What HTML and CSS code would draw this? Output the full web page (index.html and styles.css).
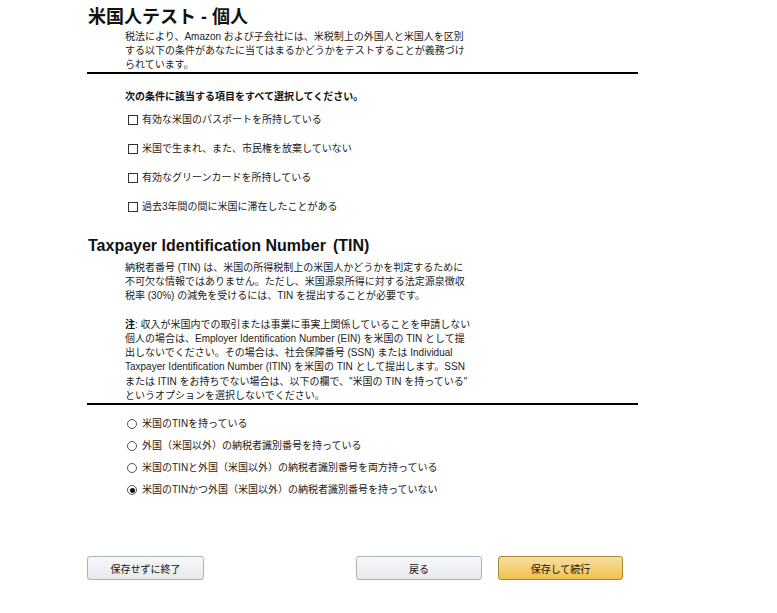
FILE: index.html
```html
<!DOCTYPE html>
<html lang="ja">
<head>
<meta charset="utf-8">
<title>米国人テスト - 個人</title>
<link rel="stylesheet" href="styles.css">
</head>
<body>
<div class="page">
  <h1 class="title">米国人テスト - 個人</h1>
  <p class="para intro">税法により、Amazon および子会社には、米税制上の外国人と米国人を区別<br>する以下の条件があなたに当てはまるかどうかをテストすることが義務づけ<br>られています。</p>
  <div class="rule"></div>

  <p class="label">次の条件に該当する項目をすべて選択してください。</p>
  <ul class="checks">
    <li class="opt"><span class="box"></span>有効な米国のパスポートを所持している</li>
    <li class="opt"><span class="box"></span>米国で生まれ、また、市民権を放棄していない</li>
    <li class="opt"><span class="box"></span>有効なグリーンカードを所持している</li>
    <li class="opt"><span class="box"></span>過去3年間の間に米国に滞在したことがある</li>
  </ul>

  <h2 class="subtitle">Taxpayer Identification Number<span class="tinabbr">(TIN)</span></h2>
  <p class="para tin">納税者番号 (TIN) は、米国の所得税制上の米国人かどうかを判定するために<br>不可欠な情報ではありません。ただし、米国源泉所得に対する法定源泉徴収<br>税率 (30%) の減免を受けるには、TIN を提出することが必要です。<br><br><b>注</b>: 収入が米国内での取引または事業に事実上関係していることを申請しない<br>個人の場合は、Employer Identification Number (EIN) を米国の TIN として提<br>出しないでください。その場合は、社会保障番号 (SSN) または Individual<br>Taxpayer Identification Number (ITIN) を米国の TIN として提出します。SSN<br>または ITIN をお持ちでない場合は、以下の欄で、"米国の TIN を持っている"<br>というオプションを選択しないでください。</p>
  <div class="rule"></div>

  <ul class="radios">
    <li class="opt"><span class="radio"></span>米国のTINを持っている</li>
    <li class="opt"><span class="radio"></span>外国（米国以外）の納税者識別番号を持っている</li>
    <li class="opt"><span class="radio"></span>米国のTINと外国（米国以外）の納税者識別番号を両方持っている</li>
    <li class="opt"><span class="radio checked"></span>米国のTINかつ外国（米国以外）の納税者識別番号を持っていない</li>
  </ul>

  <div class="actions">
    <button class="btn exit">保存せずに終了</button>
    <div class="right">
      <button class="btn back">戻る</button>
      <button class="btn primary">保存して続行</button>
    </div>
  </div>
</div>
</body>
</html>
```

FILE: styles.css
```css
* { box-sizing: border-box; }
html, body { margin: 0; padding: 0; background: #fff; }
body {
  font-family: "Liberation Sans", "Noto Sans CJK JP", sans-serif;
  color: #222;
}
.page {
  width: 638px;
  padding-left: 87px;
  padding-top: 6px;
}
.title {
  margin: 0;
  font-size: 18px;
  line-height: 22px;
  font-weight: bold;
  color: #111;
  padding-left: 1px;
}
.para {
  margin: 0 0 0 38px;
  font-size: 10px;
  white-space: nowrap;
  color: #222;
}
.intro {
  margin-top: 2px;
  line-height: 14px;
}
.rule {
  height: 2px;
  background: #000;
  width: 551px;
}
.label {
  margin: 16px 0 0 38px;
  font-size: 10px;
  line-height: 14px;
  font-weight: bold;
  color: #111;
}
ul { list-style: none; margin: 0; padding: 0; }
.checks {
  margin: 9px 0 0 41px;
  display: flex;
  flex-direction: column;
  gap: 15px;
}
.opt {
  display: flex;
  align-items: center;
  font-size: 10px;
  line-height: 14px;
  color: #222;
}
.box {
  width: 10px;
  height: 10px;
  border: 1px solid #333;
  margin-right: 4px;
  flex: none;
}
.subtitle {
  margin: 22px 0 0 1px;
  font-size: 16px;
  line-height: 20px;
  font-weight: bold;
  color: #111;
}
.tinabbr { margin-left: 7px; }
.tin {
  margin-top: 5px;
  line-height: 14.2px;
}
.tin b { font-weight: bold; color: #111; }
.radios {
  margin: 12px 0 0 40px;
  display: flex;
  flex-direction: column;
  gap: 8px;
}
.radio {
  width: 10px;
  height: 10px;
  border: 1px solid #555;
  border-radius: 50%;
  margin-right: 5px;
  flex: none;
  position: relative;
}
.radio.checked::after {
  content: "";
  position: absolute;
  left: 1.5px;
  top: 1.5px;
  width: 5px;
  height: 5px;
  border-radius: 50%;
  background: #111;
}
.actions {
  margin-top: 59px;
  width: 536px;
  display: flex;
  justify-content: space-between;
}
.right { display: flex; gap: 16px; }
.btn {
  height: 24px;
  font-family: "Liberation Sans", "Noto Sans CJK JP", sans-serif;
  font-size: 10px;
  color: #111;
  border: 1px solid #adb1b8;
  border-radius: 3px;
  background: linear-gradient(#f7f8fa, #e7e9ec);
  padding: 0;
}
.exit { width: 117px; }
.back { width: 126px; }
.primary {
  width: 125px;
  border-color: #a88734;
  background: linear-gradient(#f7dfa5, #f0c14b);
}
```
